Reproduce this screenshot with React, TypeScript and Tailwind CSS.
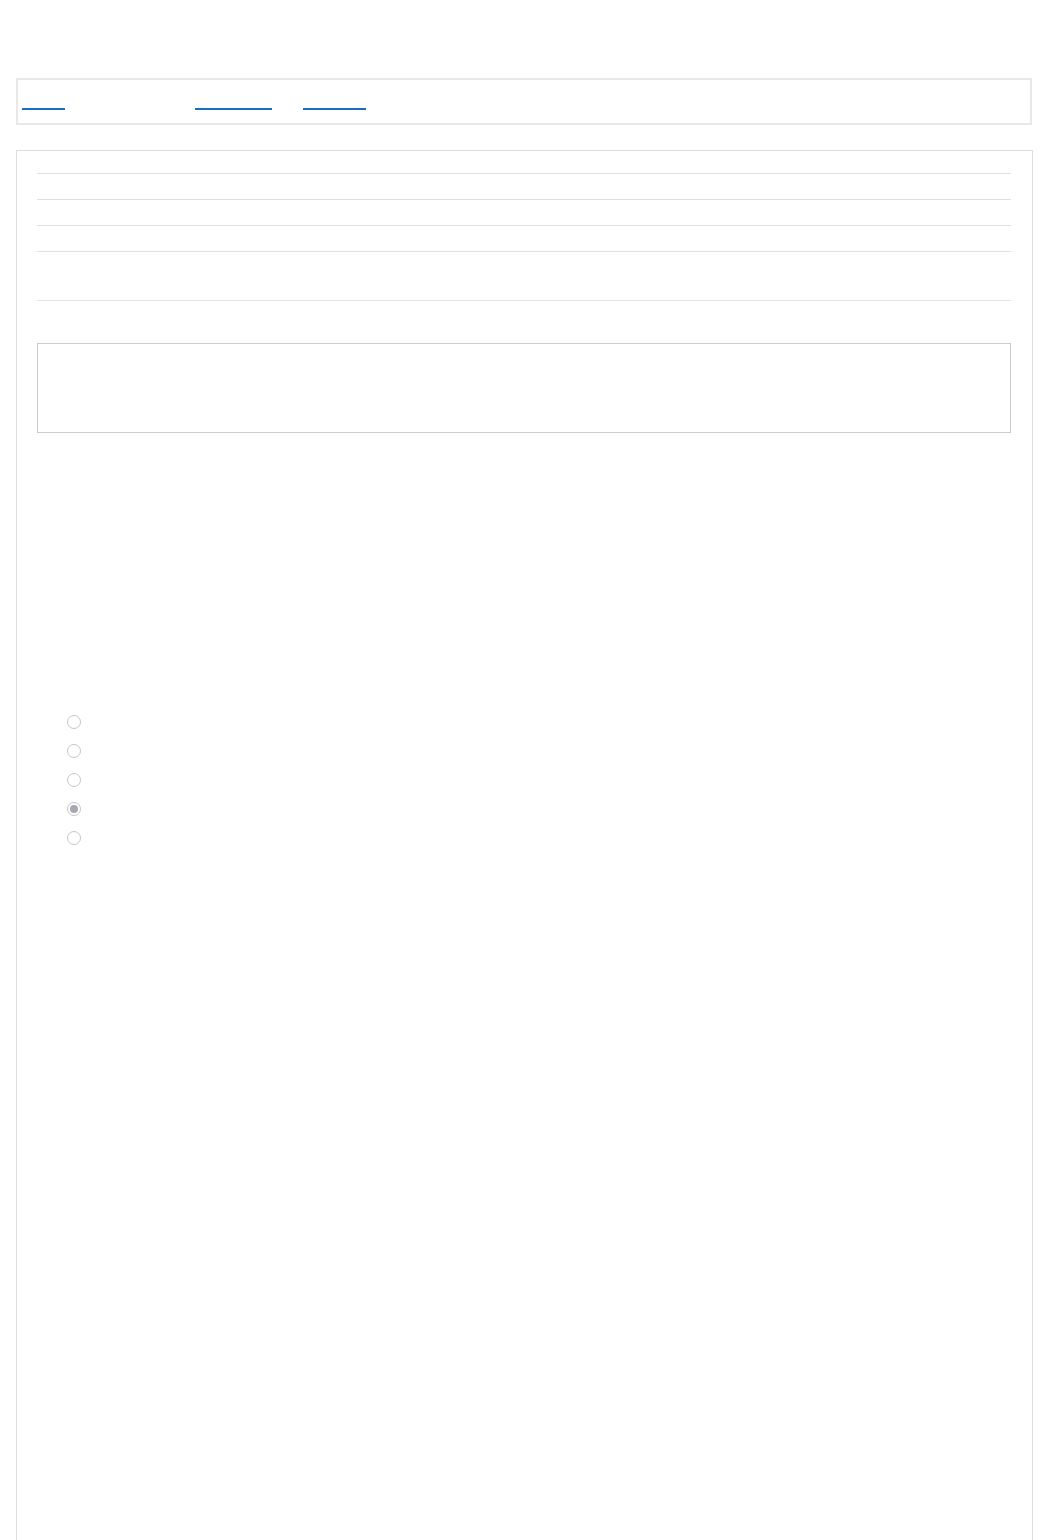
import React from "react";

const links = [
  { w: 43, ml: 4 },
  { w: 77, ml: 130 },
  { w: 63, ml: 31 },
];

const radios = [false, false, false, true, false];

export default function App() {
  return (
    <div className="min-h-[1540px] bg-white pt-[78px]" style={{ fontFamily: "'Liberation Sans', Arial, sans-serif" }}>
      {/* top nav bar */}
      <div className="mx-4 flex h-[47px] items-start border-2 border-[#e6e8ec] pt-[28px]">
        {links.map((l, i) => (
          <a key={i} className="block h-[2px] bg-[#1a6dbf]" style={{ width: l.w, marginLeft: l.ml }} />
        ))}
      </div>

      {/* main panel */}
      <div className="ml-4 mt-[25px] h-[1390px] w-[1017px] border border-b-0 border-[#dddddd] pl-5 pr-[21px]">
        <div className="pt-[22px]">
          <div className="h-px bg-[#e0e0e0]" />
          <div className="mt-[25px] h-px bg-[#e0e0e0]" />
          <div className="mt-[25px] h-px bg-[#e0e0e0]" />
          <div className="mt-[25px] h-px bg-[#e0e0e0]" />
          <div className="mt-[48px] h-px bg-[#e1e3e8]" />
        </div>

        <div className="mt-[42px] h-[90px] border border-[#c9ccd3]" />

        <div className="ml-[30px] mt-[282px] flex flex-col gap-[15px]">
          {radios.map((on, i) => (
            <div key={i} className="flex h-[14px] w-[14px] items-center justify-center rounded-full border border-[#c6c6c6] bg-white">
              {on && <div className="h-[8px] w-[8px] rounded-full bg-[#a7a8b2]" />}
            </div>
          ))}
        </div>
      </div>
    </div>
  );
}
